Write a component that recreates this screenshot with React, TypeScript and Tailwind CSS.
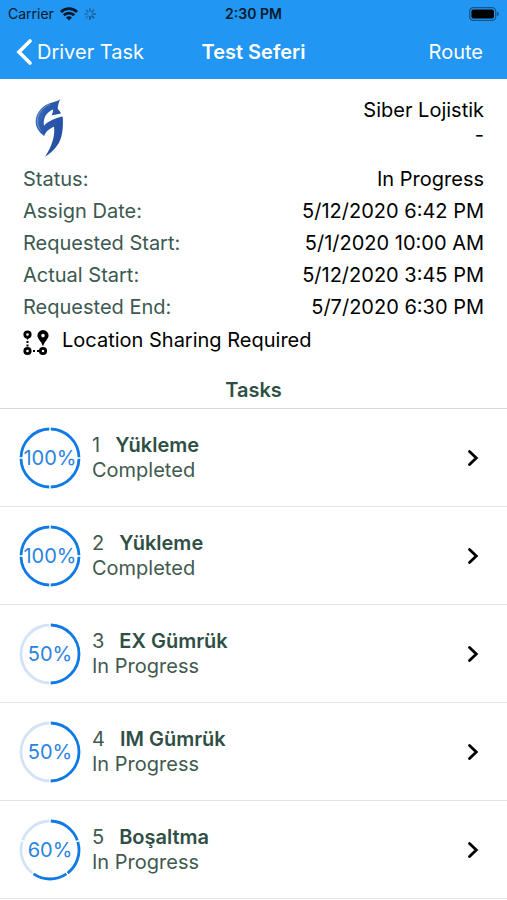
type Task = {
  order: number;
  title: string;
  status: string;
  percent: number;
  steps: number;
  done: number;
};

const details = [
  { label: 'Status:', value: 'In Progress' },
  { label: 'Assign Date:', value: '5/12/2020 6:42 PM' },
  { label: 'Requested Start:', value: '5/1/2020 10:00 AM' },
  { label: 'Actual Start:', value: '5/12/2020 3:45 PM' },
  { label: 'Requested End:', value: '5/7/2020 6:30 PM' },
];

const tasks: Task[] = [
  { order: 1, title: 'Yükleme', status: 'Completed', percent: 100, steps: 4, done: 4 },
  { order: 2, title: 'Yükleme', status: 'Completed', percent: 100, steps: 4, done: 4 },
  { order: 3, title: 'EX Gümrük', status: 'In Progress', percent: 50, steps: 2, done: 1 },
  { order: 4, title: 'IM Gümrük', status: 'In Progress', percent: 50, steps: 2, done: 1 },
  { order: 5, title: 'Boşaltma', status: 'In Progress', percent: 60, steps: 5, done: 3 },
];

function WifiIcon() {
  return (
    <svg viewBox="0 0 18 14" className="h-[14px] w-[18px]" fill="none" stroke="#06192b" strokeWidth={2.8}>
      <path d="M1 5a11.400 11.400 0 0 1 16 0" />
      <path d="M3.800 8.300a7.400 7.400 0 0 1 10.400 0" />
      <path d="M9 13.500 6 10.500a4.200 4.200 0 0 1 6 0Z" fill="#06192b" stroke="none" />
    </svg>
  );
}

function SpinnerIcon() {
  return (
    <svg viewBox="0 0 12 12" className="h-3 w-3" stroke="#17456f" strokeWidth={1.4} strokeLinecap="round">
      {[0, 1, 2, 3, 4, 5, 6, 7].map((i) => (
        <path key={i} d="M6 .8v2.4" transform={`rotate(${i * 45} 6 6)`} opacity={0.4 + ((i + 3) % 8) * 0.08} />
      ))}
    </svg>
  );
}

function BatteryIcon() {
  return (
    <svg viewBox="0 0 30 14" className="h-[14px] w-[30px]">
      <rect x="0.7" y="0.7" width="26" height="12.6" rx="3.6" fill="none" stroke="#17568c" strokeWidth={1.3} />
      <rect x="2.4" y="2.4" width="22.6" height="9.2" rx="2" fill="#000" />
      <path d="M28 4.800c1.300.4 1.800 1.200 1.800 2.200S29.300 8.800 28 9.200Z" fill="#17568c" />
    </svg>
  );
}

function CompanyLogo() {
  return (
    <svg viewBox="0 0 30 60" className="h-[60px] w-[30px]" role="img" aria-label="Siber Lojistik">
      <defs>
        <linearGradient id="logo-fill" x1="0" y1="0" x2="1" y2="0.6">
          <stop offset="0" stopColor="#5a86cc" />
          <stop offset="0.35" stopColor="#2d5bb0" />
          <stop offset="1" stopColor="#2450a3" />
        </linearGradient>
      </defs>
      <path
        d="M25.500.5C24 3 20.500 3.600 17 4.500 7.500 7 .6 15 .6 23.500c0 6 3.400 10.500 8.600 14.500 1.300-4 4.800-7.500 9.800-9.300 1.200 9-1.800 19-9 30C19.500 53 25.800 45 27.300 34c.7-5 .8-10.500.4-15.500-6.700 1.500-14 4-18.700 9.200C7.800 21 11 14 18 11.500c.2 2-.6 4-1.300 5.800 2.700-.6 6-1 9.300-1.800-.8-2.300-2.600-3.200-3.300-4.700.2-4 1.300-7.300 2.800-10.300Z"
        fill="url(#logo-fill)"
      />
      <path d="M15 6.500C7 9.500 2.500 16 2.300 23c0 3.500 1.200 6.500 3.500 9.500" fill="none" stroke="#7da1d8" strokeWidth={0.8} />
    </svg>
  );
}

function RouteIcon() {
  return (
    <svg viewBox="0 0 26 26" className="h-[26px] w-[26px]" fill="none" stroke="#000" strokeWidth={2.8}>
      <circle cx="4.500" cy="4.500" r="2.700" />
      <path d="M2 6.500 4.500 10 7 6.500Z" fill="#000" stroke="none" />
      <path d="M4.500 11v2M4.500 14.500v2" strokeWidth={2} />
      <circle cx="4.500" cy="21" r="2.700" />
      <path d="M10 21h2M14 21h2" strokeWidth={2} />
      <circle cx="20" cy="21" r="2.700" />
      <path
        d="M20 0a5.600 5.600 0 0 0-5.600 5.600c0 3.400 3.800 5.400 5.600 10.900 1.800-5.500 5.600-7.500 5.600-10.900A5.600 5.600 0 0 0 20 0Zm0 3.800a1.800 1.800 0 1 1 0 3.600 1.800 1.800 0 0 1 0-3.600Z"
        fill="#000"
        fillRule="evenodd"
        stroke="none"
      />
    </svg>
  );
}

// Ring split into equal segments, clockwise from the top
function ProgressRing({ percent, steps, done }: { percent: number; steps: number; done: number }) {
  const r = 29;
  const length = 2 * Math.PI * r;
  const gap = 1.6;
  const segment = length / steps - gap;

  return (
    <div className="relative grid h-[62px] w-[62px] shrink-0 place-items-center">
      <svg viewBox="0 0 62 62" className="absolute inset-0 h-full w-full" fill="none">
        {Array.from({ length: steps }, (_, i) => (
          <circle
            key={i}
            cx="31"
            cy="31"
            r={r}
            stroke={i < done ? '#0f7ae5' : '#d3e3f7'}
            strokeWidth={2.8}
            strokeDasharray={`${segment} ${length - segment}`}
            strokeDashoffset={-gap / 2}
            transform={`rotate(${-90 + (i * 360) / steps} 31 31)`}
          />
        ))}
      </svg>
      <span className="pt-0.5 text-xl leading-[25px] text-[#2a83e0]">{percent}%</span>
    </div>
  );
}

function TaskRow({ task }: { task: Task }) {
  return (
    <li className="border-b border-[#e4e4e6]">
      <button type="button" className="flex h-[97px] w-full items-center gap-[11px] pr-7 pl-[19px] text-left">
        <ProgressRing percent={task.percent} steps={task.steps} done={task.done} />
        <span className="flex flex-1 flex-col text-xl leading-[25px] text-[#41594f]">
          <span className="flex gap-[15px]">
            <span>{task.order}</span>
            <span className="font-semibold text-[#2f4f46]">{task.title}</span>
          </span>
          <span>{task.status}</span>
        </span>
        <svg viewBox="0 0 12 18" className="h-[18px] w-3" fill="none" stroke="#000" strokeWidth={2.8}>
          <path d="M2.500 2.500 9.300 9 2.500 15.500" strokeLinecap="round" />
        </svg>
      </button>
    </li>
  );
}

export default function App() {
  return (
    <div className="min-h-screen bg-white font-['Inter',sans-serif] text-black">
      <header className="bg-[#2296f3] pb-[3px]">
        <div className="grid h-7 grid-cols-3 items-center px-2 text-sm text-[#06192b]">
          <div className="flex items-center gap-[6px]">
            <span>Carrier</span>
            <WifiIcon />
            <SpinnerIcon />
          </div>
          <span className="text-center font-semibold">2:30 PM</span>
          <div className="flex justify-end">
            <BatteryIcon />
          </div>
        </div>
        <nav className="grid h-12 grid-cols-3 items-center px-4 text-xl text-white">
          <button type="button" className="flex items-center gap-[5px] whitespace-nowrap">
            <svg viewBox="0 0 16 26" className="h-[26px] w-4" fill="none" stroke="#fff" strokeWidth={3.6}>
              <path d="M14 2 3 13l11 11" strokeLinecap="round" />
            </svg>
            Driver Task
          </button>
          <h1 className="text-center font-semibold whitespace-nowrap">Test Seferi</h1>
          <button type="button" className="justify-self-end pr-2">
            Route
          </button>
        </nav>
      </header>

      <section className="px-[23px] pt-[19px] text-xl">
        <div className="flex h-[65px] items-start justify-between pl-3">
          <CompanyLogo />
          <div className="text-right leading-[25px]">
            <p>Siber Lojistik</p>
            <p>-</p>
          </div>
        </div>
        <dl>
          {details.map((item) => (
            <div key={item.label} className="flex h-8 items-center justify-between">
              <dt className="text-[#3b5950]">{item.label}</dt>
              <dd>{item.value}</dd>
            </div>
          ))}
        </dl>
        <div className="flex h-[34px] items-start gap-[13px]">
          <div className="pt-[7px]">
            <RouteIcon />
          </div>
          <p className="leading-[34px]">Location Sharing Required</p>
        </div>
      </section>

      <section>
        <h2 className="border-b border-[#d8d8da] pt-[15px] text-center text-xl leading-9 font-semibold text-[#2f4f46]">
          Tasks
        </h2>
        <ul>
          {tasks.map((task) => (
            <TaskRow key={task.order} task={task} />
          ))}
        </ul>
      </section>
    </div>
  );
}
